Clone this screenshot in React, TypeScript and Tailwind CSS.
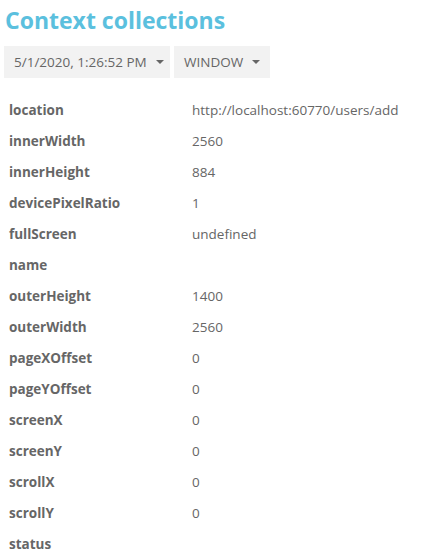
import React from "react";

const rows: [string, string][] = [
  ["location", "http://localhost:60770/users/add"],
  ["innerWidth", "2560"],
  ["innerHeight", "884"],
  ["devicePixelRatio", "1"],
  ["fullScreen", "undefined"],
  ["name", ""],
  ["outerHeight", "1400"],
  ["outerWidth", "2560"],
  ["pageXOffset", "0"],
  ["pageYOffset", "0"],
  ["screenX", "0"],
  ["screenY", "0"],
  ["scrollX", "0"],
  ["scrollY", "0"],
  ["status", ""],
];

const Caret = () => (
  <span className="ml-[9px] inline-block w-0 h-0 border-l-[4px] border-r-[4px] border-t-[4px] border-l-transparent border-r-transparent border-t-[#666]" />
);

const App: React.FC = () => {
  return (
    <div className="px-[4px] pt-[4px] font-['Open_Sans','Noto_Sans',sans-serif] text-[#666]">
      <h1 className="text-[23px] font-bold leading-[32px] text-[#5bc0de] pl-[1px]">
        Context collections
      </h1>
      <div className="flex gap-[4px] mt-[10px]">
        <button className="flex items-center justify-between whitespace-nowrap h-[32px] w-[166px] px-[10px] bg-[#f2f2f2] text-[13.5px] text-[#666]">
          5/1/2020, 1:26:52 PM
          <Caret />
        </button>
        <button className="flex items-center justify-between whitespace-nowrap h-[32px] w-[96px] px-[10px] bg-[#f2f2f2] text-[13.5px] text-[#666]">
          WINDOW
          <Caret />
        </button>
      </div>
      <table className="mt-[17px] text-[13.5px]">
        <tbody>
          {rows.map(([k, v]) => (
            <tr key={k} className="h-[31px]">
              <td className="w-[188px] px-[5px] font-bold">{k}</td>
              <td className="px-[0px]">{v}</td>
            </tr>
          ))}
        </tbody>
      </table>
    </div>
  );
};

export default App;
